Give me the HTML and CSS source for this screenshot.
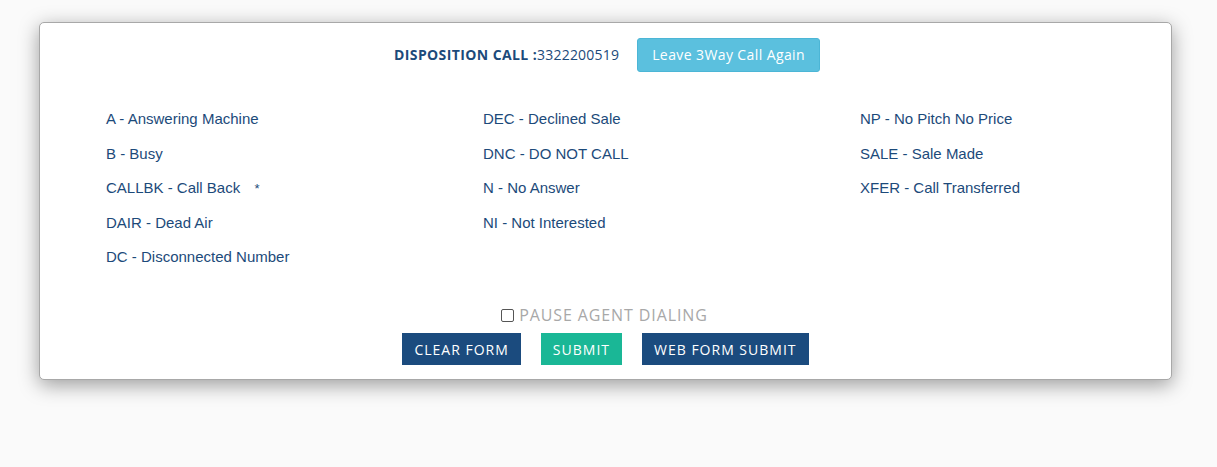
FILE: index.html
```html
<!DOCTYPE html>
<html>
<head>
<meta charset="utf-8">
<link rel="stylesheet" href="styles.css">
</head>
<body>
<div class="card">
  <div class="head">
    <span class="label"><b>DISPOSITION CALL :</b>3322200519</span>
    <button class="btn btn-info">Leave 3Way Call Again</button>
  </div>
  <div class="cols">
    <ul class="col">
      <li>A - Answering Machine</li>
      <li>B - Busy</li>
      <li>CALLBK - Call Back <span class="star">*</span></li>
      <li>DAIR - Dead Air</li>
      <li>DC - Disconnected Number</li>
    </ul>
    <ul class="col">
      <li>DEC - Declined Sale</li>
      <li>DNC - DO NOT CALL</li>
      <li>N - No Answer</li>
      <li>NI - Not Interested</li>
    </ul>
    <ul class="col">
      <li>NP - No Pitch No Price</li>
      <li>SALE - Sale Made</li>
      <li>XFER - Call Transferred</li>
    </ul>
  </div>
  <label class="pause"><span class="box"></span>PAUSE AGENT DIALING</label>
  <div class="actions">
    <button class="btn btn-dark">CLEAR FORM</button>
    <button class="btn btn-green">SUBMIT</button>
    <button class="btn btn-dark">WEB FORM SUBMIT</button>
  </div>
</div>
</body>
</html>
```
FILE: styles.css
```css
html, body {
  margin: 0;
  padding: 0;
  background: #fafafa;
}
html {
  height: 100%;
}
body {
  min-height: 100%;
  box-sizing: border-box;
  padding: 22px 45px 0 39px;
  font-family: "Liberation Sans", Arial, sans-serif;
}
.card {
  background: #fff;
  border: 1px solid #a8a8a8;
  border-radius: 5px;
  box-shadow: 0 5px 20px rgba(0,0,0,0.38);
  height: 358px;
  box-sizing: border-box;
  padding-top: 15px;
}
.head {
  display: flex;
  justify-content: center;
  align-items: center;
  gap: 18px;
  font-family: "Open Sans", sans-serif;
  color: #1c4a7a;
  margin-left: 3px;
}
.label {
  font-size: 14px;
  letter-spacing: 0.2px;
  margin-top: -1px;
}
.label b {
  font-weight: 700;
  letter-spacing: 0.4px;
}
.btn {
  border: none;
  color: #fff;
  font-family: "Open Sans", sans-serif;
  font-size: 14px;
  cursor: pointer;
  letter-spacing: 0.3px;
}
.btn-info {
  background: #5bc0de;
  border: 1px solid #4cb6d6;
  border-radius: 3px;
  height: 34px;
  padding: 0 14px 2px;
  letter-spacing: 0.4px;
}
.cols {
  display: grid;
  grid-template-columns: repeat(3, 1fr);
  margin-top: 39px;
  height: 192px;
}
.col {
  list-style: none;
  margin: 0;
  padding: 0 0 0 66px;
}
.col li {
  font-size: 15px;
  color: #1c4a7a;
  height: 34.5px;
  line-height: 16px;
}
.star {
  margin-left: 10px;
  font-size: 13px;
}
.pause {
  display: flex;
  justify-content: center;
  align-items: center;
  gap: 5px;
  font-family: "Open Sans", sans-serif;
  font-size: 16px;
  letter-spacing: 0.9px;
  color: #a8a8a8;
  height: 20px;
  margin-top: 2px;
  margin-left: -2px;
}
.box {
  width: 11px;
  height: 11px;
  border: 1px solid #555;
  border-radius: 2px;
  background: #fff;
}
.actions {
  display: flex;
  justify-content: center;
  gap: 20px;
  margin-top: 8px;
}
.btn-dark, .btn-green {
  height: 32px;
  padding: 0 12px;
  letter-spacing: 1px;
}
.btn-dark {
  background: #1b4b7e;
}
.btn-green {
  background: #1ab796;
}
```
